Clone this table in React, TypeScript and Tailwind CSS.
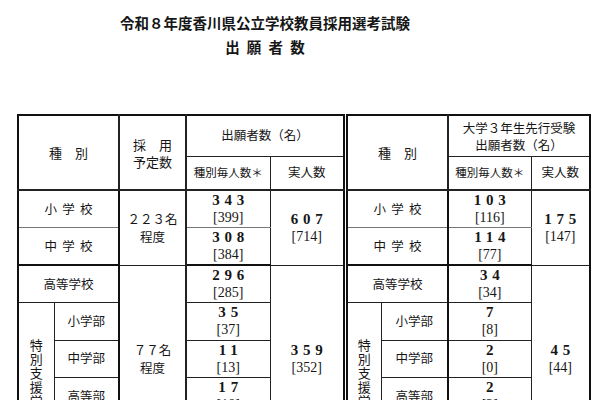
import React from "react";

const jp = "font-['Noto_Sans_CJK_JP',sans-serif]";
const serif = "font-['Liberation_Serif','Noto_Sans_CJK_JP',serif]";

function Count({ n, sub }: { n: string; sub: string }) {
  return (
    <div className="flex flex-col items-center">
      <span className={`${serif} font-bold text-[15px] leading-[17px] tracking-[0.32em] -mr-[0.32em]`}>{n}</span>
      <span className={`${serif} text-[14px] leading-[17px]`}>[{sub}]</span>
    </div>
  );
}

function Spaced({ children }: { children: React.ReactNode }) {
  return <span className="tracking-[0.42em] -mr-[0.42em]">{children}</span>;
}

// 特別支援学校, one glyph per line
function Vertical() {
  return (
    <div className="flex flex-col items-center text-[13px] leading-[14px] pt-[6px]">
      {"特別支援学校".split("").map((c, i) => (
        <span key={i}>{c}</span>
      ))}
    </div>
  );
}

const cell = "border border-[#222] text-center align-middle p-0";

export default function App() {
  return (
    <div className={`${jp} bg-white text-[#161616] w-[599px] h-[400px] overflow-hidden`}>
      {/* title */}
      <div className="w-[530px] pt-[11px] text-center font-bold text-[14.5px] leading-[24px]">
        <p>令和８年度香川県公立学校教員採用選考試験</p>
        <p>
          <span className="tracking-[0.5em] -mr-[0.5em]">出願者数</span>
        </p>
      </div>

      <div className="flex gap-[1px] pl-[17px] mt-[55px] text-[12.5px]">
        {/* left table */}
        <table className="table-fixed border-collapse border-2 border-[#111] w-[326px]">
          <colgroup>
            <col className="w-[36px]" />
            <col className="w-[65px]" />
            <col className="w-[67px]" />
            <col className="w-[84px]" />
            <col className="w-[74px]" />
          </colgroup>
          <thead>
            <tr className="h-[41px]">
              <th colSpan={2} rowSpan={2} className={`${cell} font-normal border-r-2 border-b-2 border-[#111] text-[13px]`}>
                種　別
              </th>
              <th rowSpan={2} className={`${cell} font-normal border-r-2 border-b-2 border-[#111] text-[13px] leading-[17px]`}>
                採　用
                <br />
                予定数
              </th>
              <th colSpan={2} className={`${cell} font-normal`}>出願者数（名）</th>
            </tr>
            <tr className="h-[34px]">
              <th className={`${cell} font-normal border-b-2 border-[#111] text-[11.5px]`}>種別毎人数＊</th>
              <th className={`${cell} font-normal border-b-2 border-[#111]`}>実人数</th>
            </tr>
          </thead>
          <tbody>
            <tr className="h-[37.5px]">
              <td colSpan={2} className={`${cell} border-r-2 border-r-[#111] border-b-[#777]`}><Spaced>小学校</Spaced></td>
              <td rowSpan={2} className={`${cell} border-r-2 border-[#111] leading-[18px]`}>
                ２２３名
                <br />
                程度
              </td>
              <td className={`${cell} border-b-[#777]`}><Count n="343" sub="399" /></td>
              <td rowSpan={2} className={cell}><Count n="607" sub="714" /></td>
            </tr>
            <tr className="h-[37.5px]">
              <td colSpan={2} className={`${cell} border-r-2 border-r-[#111] border-b-2 border-b-[#111]`}><Spaced>中学校</Spaced></td>
              <td className={`${cell} border-b-2 border-b-[#111]`}><Count n="308" sub="384" /></td>
            </tr>
            <tr className="h-[37.5px]">
              <td colSpan={2} className={`${cell} border-r-2 border-r-[#111]`}>高等学校</td>
              <td rowSpan={5} className={`${cell} border-r-2 border-[#111] leading-[18px]`}>
                ７７名
                <br />
                程度
              </td>
              <td className={cell}><Count n="296" sub="285" /></td>
              <td rowSpan={5} className={cell}><Count n="359" sub="352" /></td>
            </tr>
            <tr className="h-[37.5px]">
              <td rowSpan={4} className={cell}><Vertical /></td>
              <td className={`${cell} border-r-2 border-r-[#111]`}>小学部</td>
              <td className={cell}><Count n="35" sub="37" /></td>
            </tr>
            <tr className="h-[37.5px]">
              <td className={`${cell} border-r-2 border-r-[#111]`}>中学部</td>
              <td className={cell}><Count n="11" sub="13" /></td>
            </tr>
            <tr className="h-[37.5px]">
              <td className={`${cell} border-r-2 border-r-[#111]`}>高等部</td>
              <td className={cell}><Count n="17" sub="18" /></td>
            </tr>
            <tr className="h-[37.5px]">
              <td className={`${cell} border-r-2 border-r-[#111]`}></td>
              <td className={cell}></td>
            </tr>
          </tbody>
        </table>

        {/* right table */}
        <table className="table-fixed border-collapse border-2 border-[#111] w-[243px]">
          <colgroup>
            <col className="w-[34px]" />
            <col className="w-[67px]" />
            <col className="w-[83px]" />
            <col className="w-[59px]" />
          </colgroup>
          <thead>
            <tr className="h-[41px]">
              <th colSpan={2} rowSpan={2} className={`${cell} font-normal border-r-2 border-b-2 border-[#111] text-[13px]`}>
                種　別
              </th>
              <th colSpan={2} className={`${cell} font-normal leading-[17px]`}>
                大学３年生先行受験
                <br />
                出願者数（名）
              </th>
            </tr>
            <tr className="h-[34px]">
              <th className={`${cell} font-normal border-b-2 border-[#111] text-[11.5px]`}>種別毎人数＊</th>
              <th className={`${cell} font-normal border-b-2 border-[#111]`}>実人数</th>
            </tr>
          </thead>
          <tbody>
            <tr className="h-[37.5px]">
              <td colSpan={2} className={`${cell} border-r-2 border-r-[#111] border-b-[#777]`}><Spaced>小学校</Spaced></td>
              <td className={`${cell} border-b-[#777]`}><Count n="103" sub="116" /></td>
              <td rowSpan={2} className={cell}><Count n="175" sub="147" /></td>
            </tr>
            <tr className="h-[37.5px]">
              <td colSpan={2} className={`${cell} border-r-2 border-r-[#111] border-b-2 border-b-[#111]`}><Spaced>中学校</Spaced></td>
              <td className={`${cell} border-b-2 border-b-[#111]`}><Count n="114" sub="77" /></td>
            </tr>
            <tr className="h-[37.5px]">
              <td colSpan={2} className={`${cell} border-r-2 border-r-[#111]`}>高等学校</td>
              <td className={cell}><Count n="34" sub="34" /></td>
              <td rowSpan={5} className={cell}><Count n="45" sub="44" /></td>
            </tr>
            <tr className="h-[37.5px]">
              <td rowSpan={4} className={cell}><Vertical /></td>
              <td className={`${cell} border-r-2 border-r-[#111]`}>小学部</td>
              <td className={cell}><Count n="7" sub="8" /></td>
            </tr>
            <tr className="h-[37.5px]">
              <td className={`${cell} border-r-2 border-r-[#111]`}>中学部</td>
              <td className={cell}><Count n="2" sub="0" /></td>
            </tr>
            <tr className="h-[37.5px]">
              <td className={`${cell} border-r-2 border-r-[#111]`}>高等部</td>
              <td className={cell}><Count n="2" sub="2" /></td>
            </tr>
            <tr className="h-[37.5px]">
              <td className={`${cell} border-r-2 border-r-[#111]`}></td>
              <td className={cell}></td>
            </tr>
          </tbody>
        </table>
      </div>
    </div>
  );
}
